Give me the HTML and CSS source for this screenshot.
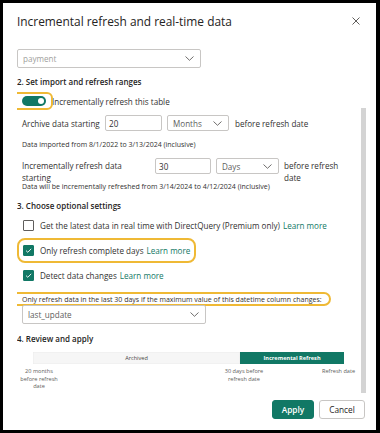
FILE: index.html
```html
<!DOCTYPE html>
<html lang="en">
<head>
<meta charset="utf-8">
<title>Incremental refresh and real-time data</title>
<link rel="stylesheet" href="styles.css">
</head>
<body>
<div class="dialog">
  <header class="head">
    <h1 class="title">Incremental refresh and real-time data</h1>
    <span class="close" aria-label="Close">
      <svg width="8" height="8" viewBox="0 0 8 8"><path d="M0.5 0.5 L7.5 7.5 M7.5 0.5 L0.5 7.5" stroke="#605e5c" stroke-width="1" fill="none"/></svg>
    </span>
  </header>
  <div class="body">
    <div class="content">
      <div class="select wide placeholder">
        <span>payment</span>
        <svg class="chev" width="9" height="5" viewBox="0 0 9 5"><path d="M0.5 0.5 L4.5 4.3 L8.5 0.5" stroke="#605e5c" stroke-width="0.9" fill="none"/></svg>
      </div>

      <h2 class="section s2">2. Set import and refresh ranges</h2>
      <div class="toggle-row">
        <span class="toggle"><span class="knob"></span></span>
        <span class="toggle-label">Incrementally refresh this table</span>
        <span class="hl hl-toggle"></span>
      </div>

      <div class="range-row archive">
        <span class="lbl">Archive data starting</span>
        <span class="input in1">20</span>
        <span class="select sel1"><span>Months</span><svg class="chev" width="9" height="5" viewBox="0 0 9 5"><path d="M0.5 0.5 L4.5 4.3 L8.5 0.5" stroke="#605e5c" stroke-width="0.9" fill="none"/></svg></span>
        <span class="after">before refresh date</span>
      </div>
      <p class="info info1">Data imported from 8/1/2022 to 3/13/2024 (inclusive)</p>

      <div class="range-row incr">
        <span class="lbl lbl2">Incrementally refresh data starting</span>
        <span class="input in2">30</span>
        <span class="select sel2"><span>Days</span><svg class="chev" width="9" height="5" viewBox="0 0 9 5"><path d="M0.5 0.5 L4.5 4.3 L8.5 0.5" stroke="#605e5c" stroke-width="0.9" fill="none"/></svg></span>
        <span class="after after2">before refresh date</span>
      </div>
      <p class="info info2">Data will be incrementally refreshed from 3/14/2024 to 4/12/2024 (inclusive)</p>

      <h2 class="section s3">3. Choose optional settings</h2>
      <div class="check-row">
        <span class="cb"></span>
        <span class="cb-label">Get the latest data in real time with DirectQuery (Premium only)</span>
        <a class="link">Learn more</a>
      </div>
      <div class="check-row">
        <span class="cb on"><svg width="11" height="11" viewBox="0 0 11 11"><path d="M3 5.6 L4.8 7.3 L8.2 3.8" stroke="#fff" stroke-width="0.9" fill="none"/></svg></span>
        <span class="cb-label">Only refresh complete days</span>
        <a class="link">Learn more</a>
        <span class="hl hl-days"></span>
      </div>
      <div class="check-row">
        <span class="cb on"><svg width="11" height="11" viewBox="0 0 11 11"><path d="M3 5.6 L4.8 7.3 L8.2 3.8" stroke="#fff" stroke-width="0.9" fill="none"/></svg></span>
        <span class="cb-label">Detect data changes</span>
        <a class="link">Learn more</a>
      </div>

      <p class="detect-note">Only refresh data in the last 30 days if the maximum value of this datetime column changes:</p>
      <div class="select wide col">
        <span>last_update</span>
        <svg class="chev" width="9" height="5" viewBox="0 0 9 5"><path d="M0.5 0.5 L4.5 4.3 L8.5 0.5" stroke="#605e5c" stroke-width="0.9" fill="none"/></svg>
      </div>

      <h2 class="section s4">4. Review and apply</h2>
      <div class="timeline">
        <span class="seg archived">Archived</span>
        <span class="seg incremental">Incremental Refresh</span>
      </div>
      <div class="marks">
        <span class="mark m1">20 months before refresh date</span>
        <span class="mark m2">30 days before refresh date</span>
        <span class="mark m3">Refresh date</span>
      </div>
    </div>
    <div class="scrollbar"><div class="thumb"></div></div>
  </div>
  <footer class="foot">
    <button class="btn primary">Apply</button>
    <button class="btn">Cancel</button>
  </footer>
</div>
</body>
</html>
```

FILE: styles.css
```css
html, body {
  margin: 0;
  padding: 0;
  background: #000;
}
body {
  padding: 3px 0 0 3px;
  font-family: "Open Sans", "Noto Sans", sans-serif;
  color: #252423;
}
.dialog {
  width: 373px;
  height: 427px;
  background: #fff;
  box-sizing: border-box;
  padding: 0 10px 0 14px;
  display: flex;
  flex-direction: column;
}
.head {
  height: 36px;
  flex: none;
  display: flex;
  align-items: center;
  justify-content: space-between;
}
.title {
  margin: 0;
  font-size: 11.9px;
  line-height: 16px;
  font-weight: 400;
  color: #252423;
}
.close {
  display: flex;
  margin-right: 6px;
}
.body {
  flex: 1;
  display: flex;
  overflow: hidden;
}
.content {
  width: 344px;
  flex: none;
  font-size: 8.1px;
  color: #323130;
}
.scrollbar {
  width: 5px;
  padding-top: 69px;
  padding-bottom: 2px;
  box-sizing: border-box;
  display: flex;
}
.thumb {
  flex: 1;
  background: #d4d4d4;
}

/* selects and inputs */
.select, .input {
  box-sizing: border-box;
  height: 16px;
  border: 1px solid #c8c6c4;
  border-radius: 2px;
  display: flex;
  align-items: center;
  font-size: 8.1px;
  color: #605e5c;
}
.select {
  justify-content: space-between;
  padding: 0 6px 0 5px;
}
.select.wide {
  width: 184px;
  height: 19px;
}
.placeholder {
  margin-top: 10px;
  color: #a19f9d;
}
.chev { flex: none; }
.input {
  padding-left: 3px;
  color: #323130;
}

.section {
  margin: 0;
  font-size: 8px;
  line-height: 14px;
  font-weight: 600;
  color: #252423;
}
.s2 { margin-top: 7px; }
.s3 { margin-top: 8px; }
.s4 { margin-top: 8px; }

.toggle-row {
  position: relative;
  height: 18px;
  margin-top: 3px;
  display: flex;
  align-items: center;
  padding-left: 5px;
}
.toggle {
  width: 24px;
  height: 10px;
  border-radius: 5px;
  background: #117865;
  display: flex;
  align-items: center;
  justify-content: flex-end;
  padding-right: 2px;
  box-sizing: border-box;
}
.knob {
  width: 6px;
  height: 6px;
  border-radius: 50%;
  background: #fff;
}
.toggle-label {
  margin-left: 6px;
}
.hl {
  position: absolute;
  box-sizing: border-box;
  border: 2px solid #efb935;
  pointer-events: none;
}
.hl-toggle {
  left: -6px;
  top: 0;
  width: 42px;
  height: 18px;
  border-radius: 6px;
}

.range-row {
  display: flex;
  padding-left: 5px;
}
.archive {
  margin-top: 5px;
  align-items: center;
}
.archive .lbl { width: 83px; }
.in1 { width: 57px; }
.sel1 { width: 62px; margin-left: 5px; }
.archive .after { margin-left: 6px; }

.info {
  margin: 0;
  padding-left: 5px;
  font-size: 7px;
  color: #323130;
}
.info1 { margin-top: 9px; line-height: 10px; }
.info2 { margin-top: -1px; line-height: 8px; }

.incr {
  margin-top: 8px;
  align-items: flex-start;
}
.lbl2 {
  width: 104px;
  margin-right: 29px;
  line-height: 12px;
  padding-top: 2px;
  box-sizing: border-box;
}
.in2 { width: 56px; }
.sel2 { width: 63px; margin-left: 5px; }
.after2 {
  width: 64px;
  margin-left: 5px;
  line-height: 12px;
  padding-top: 2px;
}

.check-row {
  position: relative;
  height: 25px;
  display: flex;
  align-items: center;
  padding-left: 6px;
}
.cb {
  width: 11px;
  height: 11px;
  box-sizing: border-box;
  border: 1px solid #605e5c;
  border-radius: 1px;
  flex: none;
  display: flex;
}
.cb.on {
  background: #117865;
  border-color: #117865;
}
.cb.on svg { margin: -1px; }
.cb-label {
  margin-left: 6px;
}
.link {
  margin-left: 3px;
  color: #117865;
}
.hl-days {
  left: 0;
  top: 0;
  width: 179px;
  height: 25px;
  border-radius: 8px;
}

.detect-note {
  margin: 4px 0 0 -6px;
  width: 320px;
  height: 14px;
  box-sizing: border-box;
  border: 2px solid #efb935;
  border-radius: 7px;
  padding-left: 9px;
  font-size: 7px;
  line-height: 11px;
}
.select.col {
  margin-top: -1px;
  margin-left: 5px;
  position: relative;
}

.timeline {
  margin: 6px 0 0 16px;
  width: 311px;
  height: 12px;
  display: flex;
  font-size: 5.6px;
}
.seg {
  display: flex;
  align-items: center;
  justify-content: center;
}
.archived {
  width: 207px;
  background: #f6f6f6;
  box-shadow: inset 0 0 0 0.5px #ececec;
  color: #484644;
}
.incremental {
  flex: 1;
  background: #117865;
  color: #fff;
  font-weight: 700;
}

.marks {
  margin-top: 4px;
  display: flex;
  align-items: flex-start;
  font-size: 5.6px;
  line-height: 7.5px;
  color: #605e5c;
  text-align: center;
}
.m1 { width: 42px; margin-left: 1px; }
.m2 { width: 50px; margin-left: 159px; }
.m3 { margin-left: 53px; }

.foot {
  height: 35px;
  flex: none;
  box-sizing: border-box;
  padding-top: 5px;
  display: flex;
  justify-content: flex-end;
  align-items: flex-start;
  gap: 5px;
}
.btn {
  height: 19px;
  box-sizing: border-box;
  border: 1px solid #c8c6c4;
  border-radius: 3px;
  background: #fff;
  font-family: inherit;
  font-size: 8.3px;
  color: #252423;
  padding: 0;
  width: 46px;
  margin-right: 1px;
}
.btn.primary {
  width: 42px;
  margin-right: 0;
  background: #117865;
  border-color: #117865;
  color: #fff;
  font-weight: 600;
}
```
